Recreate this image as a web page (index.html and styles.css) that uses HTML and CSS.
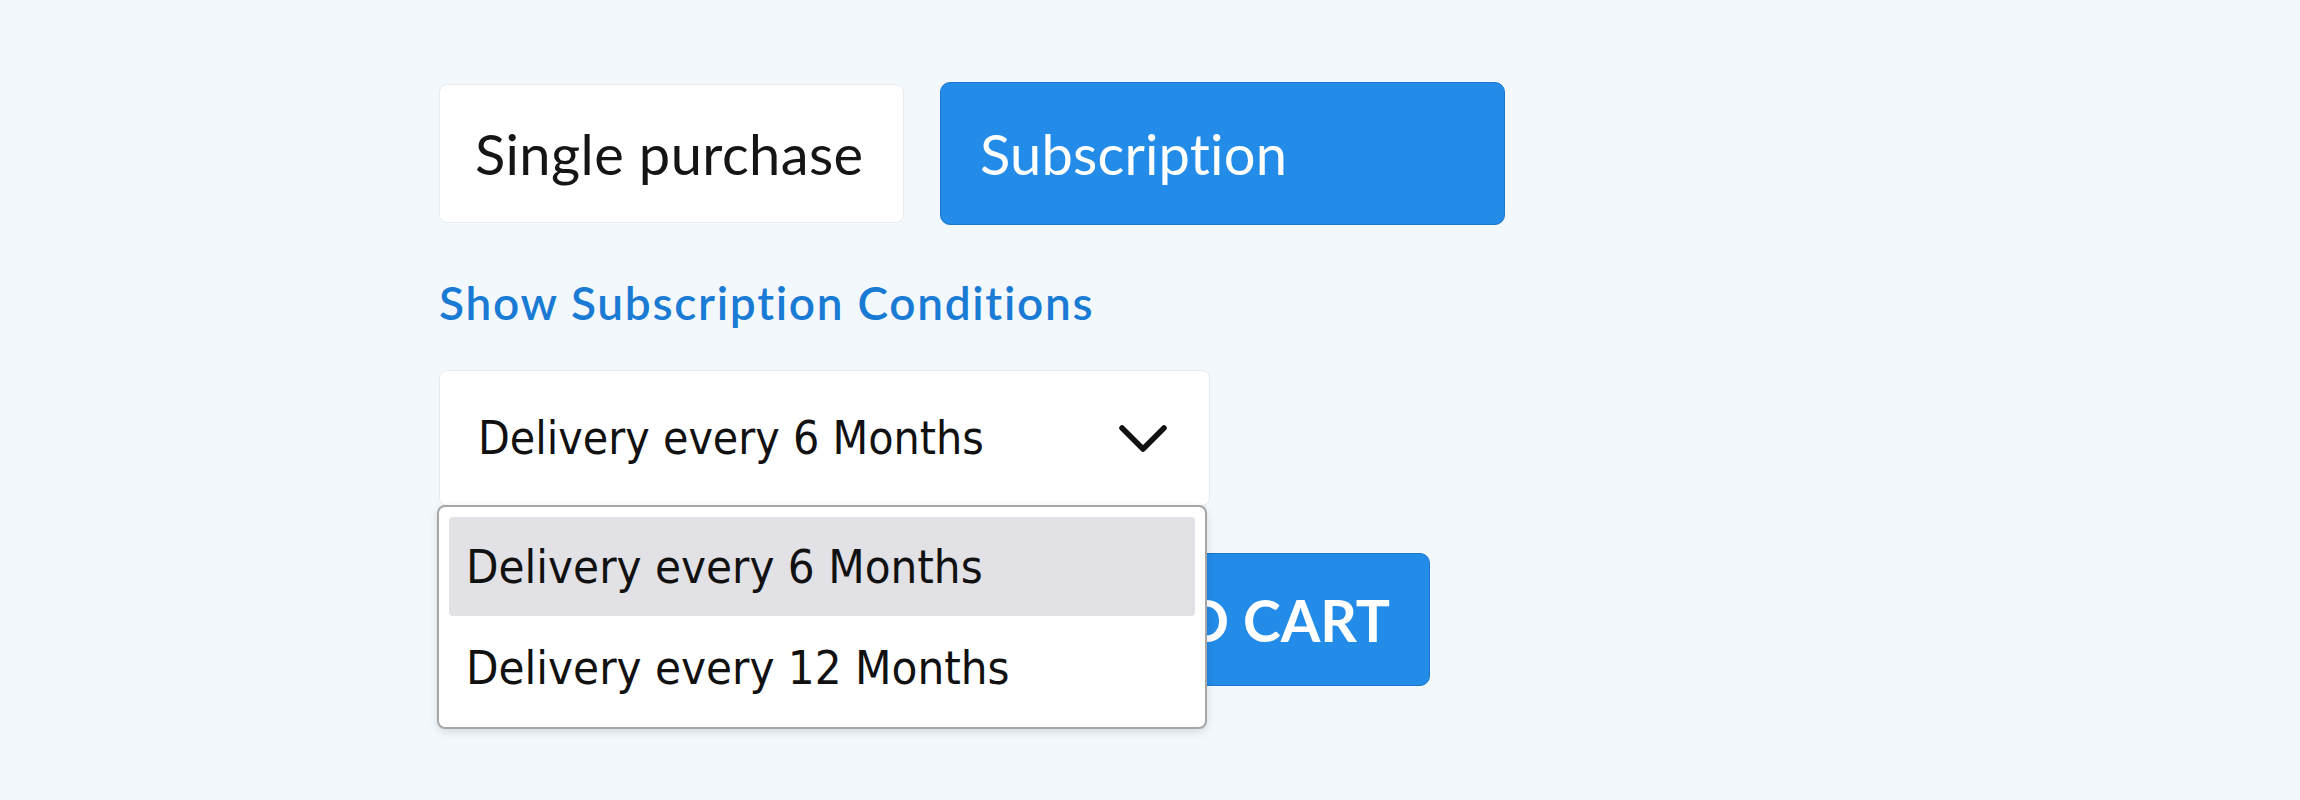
FILE: index.html
```html
<!DOCTYPE html>
<html lang="en">
<head>
<meta charset="utf-8">
<title>Subscription</title>
<link rel="stylesheet" href="styles.css">
</head>
<body>
<main class="product-form">
  <div class="purchase-toggle">
    <button class="toggle-btn">Single purchase</button>
    <button class="toggle-btn toggle-btn--active">Subscription</button>
  </div>
  <a class="conditions-link" href="#">Show Subscription Conditions</a>
  <div class="select-wrap">
    <div class="select-box">
      <span class="select-value">Delivery every 6 Months</span>
      <svg class="chevron" width="48" height="28" viewBox="0 0 48 28"><path d="M3 3 L24 24 L45 3" fill="none" stroke="#111" stroke-width="5.5" stroke-linecap="round" stroke-linejoin="round"/></svg>
    </div>
    <ul class="select-menu">
      <li class="select-option select-option--hover">Delivery every 6 Months</li>
      <li class="select-option">Delivery every 12 Months</li>
    </ul>
  </div>
  <div class="cart-row">
    <button class="cart-btn">ADD TO CART</button>
  </div>
</main>
</body>
</html>
```

FILE: styles.css
```css
html, body {
  margin: 0;
  padding: 0;
  background: #f3f8fd;
  min-height: 800px;
}

.product-form {
  display: flex;
  flex-direction: column;
  align-items: flex-start;
  padding: 82px 0 0 439px;
  min-height: 800px;
  box-sizing: border-box;
  font-family: Lato, "Open Sans", sans-serif;
}

.purchase-toggle {
  display: flex;
  align-items: center;
  gap: 36px;
}

.toggle-btn {
  font-family: Lato, sans-serif;
  font-size: 56px;
  font-weight: 400;
  letter-spacing: 0.4px;
  color: #151515;
  background: #ffffff;
  border: 1px solid #e8ebef;
  border-radius: 8px;
  height: 139px;
  width: 465px;
  padding: 0 0 0 35px;
  text-align: left;
  box-sizing: border-box;
}

.toggle-btn--active {
  color: #ffffff;
  background: #238be8;
  border: 1px solid #1c77cc;
  border-radius: 10px;
  height: 143px;
  width: 565px;
  padding-left: 39px;
  letter-spacing: 0.2px;
}

.conditions-link {
  display: block;
  margin-top: 50px;
  font-size: 46px;
  line-height: 56px;
  font-weight: 600;
  letter-spacing: 1.7px;
  color: #1a7bd5;
  text-decoration: none;
}

.select-wrap {
  position: relative;
  margin-top: 39px;
}

.select-box {
  display: flex;
  align-items: center;
  justify-content: space-between;
  box-sizing: border-box;
  width: 771px;
  height: 136px;
  padding: 0 42px 0 38px;
  background: #ffffff;
  border: 1px solid #e6e9ee;
  border-radius: 8px;
  font-family: "DejaVu Sans Condensed", "DejaVu Sans", sans-serif;
  font-size: 46px;
  color: #111111;
}

.chevron {
  display: block;
  margin-top: 2px;
}

.select-menu {
  position: absolute;
  top: 135px;
  left: -2px;
  width: 770px;
  box-sizing: border-box;
  margin: 0;
  padding: 10px 10px 12px 10px;
  list-style: none;
  background: #ffffff;
  border: 2px solid #a6a6a6;
  border-radius: 8px;
  box-shadow: 0 3px 8px rgba(0, 0, 0, 0.12);
  font-family: "DejaVu Sans Condensed", "DejaVu Sans", sans-serif;
  font-size: 47px;
  color: #111111;
  z-index: 2;
}

.select-option {
  height: 99px;
  display: flex;
  align-items: center;
  padding-left: 17px;
  border-radius: 4px;
}

.select-option + .select-option {
  padding-top: 4px;
  box-sizing: border-box;
}

.select-option--hover {
  background: #e1e1e6;
}

.cart-row {
  display: flex;
  justify-content: flex-end;
  width: 991px;
  margin-top: 47px;
}

.cart-btn {
  font-family: Lato, sans-serif;
  font-size: 57px;
  font-weight: 700;
  color: #ffffff;
  background: #238be8;
  border: 1px solid #1c77cc;
  border-radius: 10px;
  height: 133px;
  padding: 0 39px 0 39px;
}
```
